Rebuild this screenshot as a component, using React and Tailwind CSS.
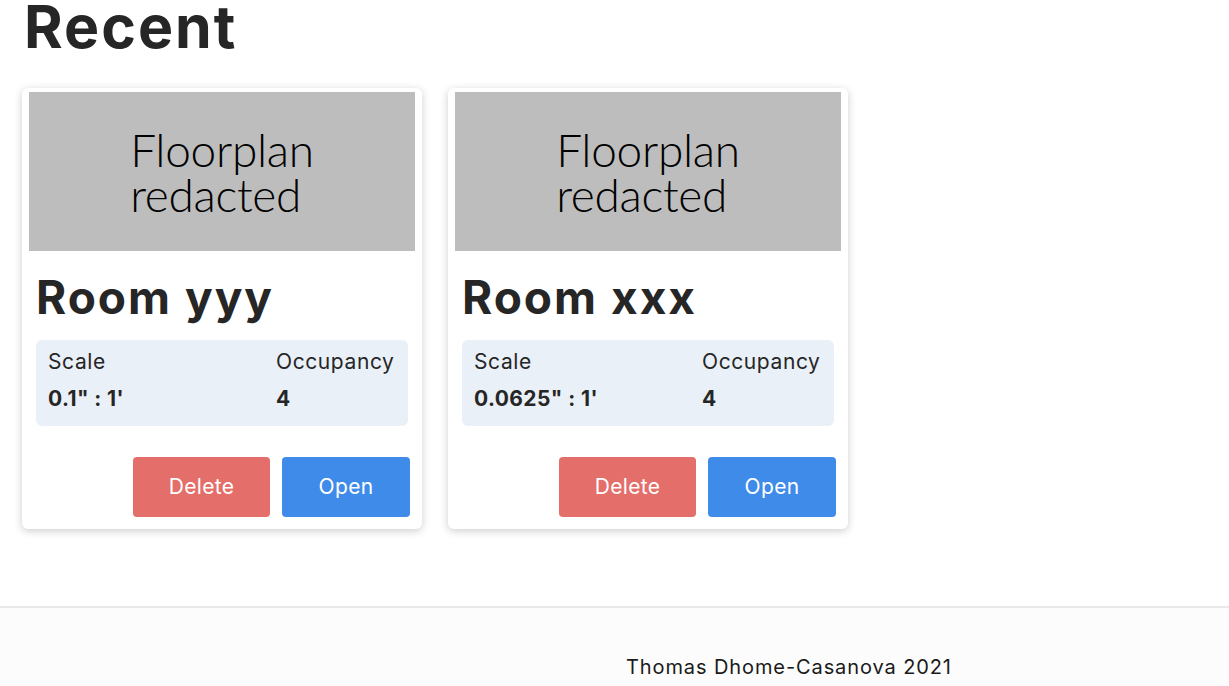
import React from 'react';

const rooms = [
  { name: 'Room yyy', scale: '0.1" : 1\'', occupancy: 4 },
  { name: 'Room xxx', scale: '0.0625" : 1\'', occupancy: 4 },
];

const font = { fontFamily: 'Inter, "DejaVu Sans", sans-serif' };

const RoomCard = ({ room }) => (
  <div className="w-[400px] bg-white rounded-md shadow-[0_2px_8px_rgba(0,0,0,0.2)] pt-[4px] pb-[12px]">
    <div className="mx-[7px] h-[159px] bg-[#bdbdbd] flex flex-col items-center justify-center">
      <p
        className="text-[46px] leading-[45px] text-black font-light tracking-[-0.3px] text-left"
        style={{ fontFamily: 'Lato, "Open Sans", sans-serif' }}
      >
        Floorplan<br />redacted
      </p>
    </div>
    <h2 className="px-[14px] mt-[18px] text-[46px] leading-[56px] font-bold text-[#262626] tracking-[2px]">
      {room.name}
    </h2>
    <div className="mx-[14px] mt-[15px] bg-[#eaf0f7] rounded-md px-[12px] pt-[8px] pb-[11px] flex justify-between">
      <div>
        <p className="text-[21px] leading-[28px] text-[#262626] tracking-[0.6px]">Scale</p>
        <p className="text-[21px] leading-[32px] font-bold text-[#262626] mt-[7px] tracking-[0.4px]">{room.scale}</p>
      </div>
      <div className="w-[120px]">
        <p className="text-[21px] leading-[28px] text-[#262626] tracking-[0.6px]">Occupancy</p>
        <p className="text-[21px] leading-[32px] font-bold text-[#262626] mt-[7px]">{room.occupancy}</p>
      </div>
    </div>
    <div className="flex justify-end gap-3 mt-[31px] px-[12px]">
      <button className="w-[137px] h-[60px] rounded bg-[#e36e6a] text-white text-[21px] tracking-[0.3px]">Delete</button>
      <button className="w-[128px] h-[60px] rounded bg-[#3f8bea] text-white text-[21px] tracking-[0.3px]">Open</button>
    </div>
  </div>
);

export default function App() {
  return (
    <div className="min-h-[686px] bg-white flex flex-col" style={font}>
      <div className="px-[22px]">
        <h1 className="text-[59px] leading-[60px] font-bold text-[#262626] tracking-[2px] mt-[-3px] pl-[2px]">Recent</h1>
        <div className="flex gap-[26px] mt-[31px]">
          {rooms.map((r) => (
            <RoomCard key={r.name} room={r} />
          ))}
        </div>
      </div>
      <footer className="mt-[77px] border-t-2 border-[#e8e8e8] bg-[#fcfcfc] flex-1">
        <p className="pl-[626px] pt-[44px] text-[20px] text-[#1a1a1a] tracking-[0.9px]">Thomas Dhome-Casanova 2021</p>
      </footer>
    </div>
  );
}
